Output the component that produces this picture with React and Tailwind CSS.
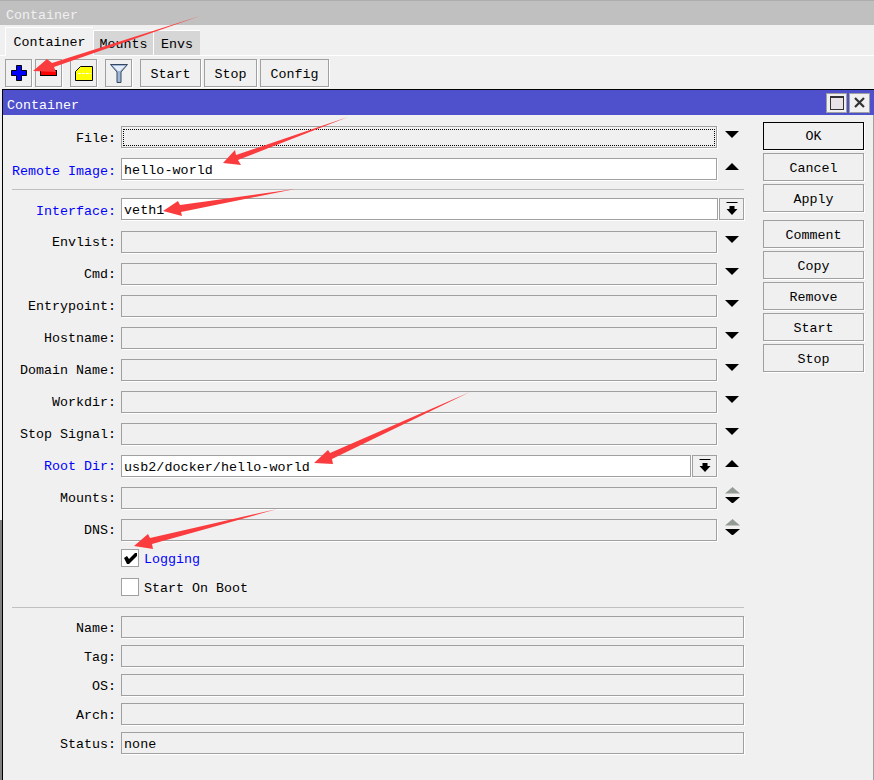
const FONT = "font-['Liberation_Mono',monospace] text-[13.33px] leading-none";

function Tri({ up, gray, big }) {
  const w = big ? 15 : 14;
  const h = big ? 8 : 7;
  return (
    <svg width={w} height={h} viewBox="0 0 14 7" preserveAspectRatio="none" className="block">
      <polygon points={up ? "7,0 14,7 0,7" : "0,0 14,0 7,7"} fill={gray ? "#949a94" : "#000"} />
    </svg>
  );
}

function DropBtn({ className }) {
  return (
    <div className={`h-[22px] flex items-center justify-center bg-[#f0f0f0] border border-[#a0a0a0] shadow-[1px_1px_0_#fff] ${className}`}>
      <svg width="12" height="14" viewBox="0 0 12 14">
        <rect x="0.5" y="0" width="11" height="1" fill="#000" />
        <path d="M3.5 4h5v3h3L6 13 .5 7h3z" fill="#000" />
      </svg>
    </div>
  );
}

function Field({ value, white, dotted, className = "" }) {
  return (
    <div className={`h-[22px] flex items-center border border-[#a0a0a0] shadow-[1px_1px_0_#fff] pl-[2px] min-w-0 ${white ? "bg-white" : "bg-[#f0f0f0]"} ${className}`}>
      {dotted && <div className="h-[17px] w-full -ml-px mr-px border border-dotted border-black" />}
      {value && <span className="text-black pt-[4px] tracking-[0.08px]">{value}</span>}
    </div>
  );
}

function Row({ label, blue, labelPad = "pt-[2px]", children, className = "" }) {
  return (
    <div className={`flex h-[22px] items-center ${className}`}>
      <div className={`w-[113px] mr-[5px] shrink-0 text-right whitespace-nowrap ${labelPad} ${blue ? "text-[#0000ff]" : "text-black"}`}>
        {label}
      </div>
      {children}
    </div>
  );
}

function ArrowSlot({ mode }) {
  return (
    <div className={`w-[28px] h-[22px] shrink-0 flex flex-col items-center justify-center gap-[3px] pl-[2px] ${mode === "both" ? "pb-[6px]" : "pb-[5px]"}`}>
      {mode === "down" && <Tri />}
      {mode === "up" && <Tri up />}
      {mode === "both" && (
        <>
          <Tri up gray big />
          <Tri big />
        </>
      )}
    </div>
  );
}

function TextRow({ label, mode = "down", value, white, dotted, blue, labelPad, className }) {
  return (
    <Row label={label} blue={blue} labelPad={labelPad} className={className}>
      <Field value={value} white={white} dotted={dotted} className="flex-1" />
      <ArrowSlot mode={mode} />
    </Row>
  );
}

function ToolBtn({ children, className = "" }) {
  return (
    <button className={`h-[28px] flex items-center justify-center bg-[#f0f0f0] border border-[#a0a0a0] shadow-[1px_1px_0_#fff] ${className}`}>
      {children}
    </button>
  );
}

function SideBtn({ children, primary, className = "" }) {
  return (
    <button className={`h-[28px] w-full flex items-center justify-center bg-[#f0f0f0] border shadow-[1px_1px_0_#fff] ${primary ? "border-black pt-[2px]" : "border-[#a0a0a0] pt-[4px]"} ${className}`}>
      {children}
    </button>
  );
}

function Separator({ className = "" }) {
  return <div className={`h-px ml-[9px] mr-px bg-[#c0c0c0] ${className}`} />;
}

function Arrows() {
  const shapes = [
    "200,16 52,63 47,59 33,71 56,72 54,67",
    "348,117 236,155 235,150 223,163 241,165 238,160",
    "295,189 180,205 178,201 163,211 182,216 181,212",
    "470,392 330,453 328,450 314,463 333,464 332,459",
    "277,509 150,538 148,534 134,546 153,549 152,544",
  ];
  return (
    <svg width="874" height="780" className="absolute inset-0 pointer-events-none">
      {shapes.map((p) => (
        <polygon key={p} points={p} fill="#fb3c3e" />
      ))}
    </svg>
  );
}

export default function App() {
  return (
    <div className={`relative w-[874px] h-[780px] overflow-hidden flex flex-col bg-[#f0f0f0] ${FONT}`}>
      {/* outer window */}
      <div className="h-[25px] shrink-0 bg-[#c0c0c0] border-t border-[#adadad] flex items-center pl-[6px] pt-[5px] text-[#f0f0f0]">
        Container
      </div>
      <div className="h-[31px] shrink-0 flex items-end pl-[5px] border-b border-white">
        <div className="h-[29px] w-[88px] flex items-center justify-center pt-[2px] bg-[#f0f0f0] border-l border-t border-white -mb-px">Container</div>
        <div className="h-[25px] w-[60px] flex items-center justify-center pt-[4px] bg-[#d6d6d6] border-l border-t border-white">Mounts</div>
        <div className="h-[25px] w-[47px] flex items-center justify-center pt-[4px] bg-[#d6d6d6] border-l border-t border-white">Envs</div>
      </div>
      <div className="h-[33px] shrink-0 flex pl-[5px] pt-[3px]">
        <ToolBtn className="w-[27px] mr-[3px]">
          <svg width="16" height="16" viewBox="0 0 16 16" className="ml-px">
            <path d="M5.5.5h5v5h5v5h-5v5h-5v-5h-5v-5h5z" fill="#0000ff" stroke="#000" />
          </svg>
        </ToolBtn>
        <ToolBtn className="w-[27px] mr-[8px]">
          <svg width="17" height="6" viewBox="0 0 17 6">
            <rect x="0.5" y="0.5" width="16" height="5" fill="#ff0000" stroke="#000" />
          </svg>
        </ToolBtn>
        <ToolBtn className="w-[27px] mr-[8px]">
          <svg width="18" height="15" viewBox="0 0 18 15">
            <path d="M5.5.5h12v14H.5V5.5z" fill="#ffff00" stroke="#000" />
            <path d="M3 7.5h13" stroke="#fff" strokeDasharray="3 1" />
          </svg>
        </ToolBtn>
        <ToolBtn className="w-[27px] mr-[8px]">
          <svg width="18" height="19" viewBox="0 0 18 19">
            <path d="M.5.5h17L11 8v10.5H7V8z" fill="#9fb6d8" stroke="#34485f" />
            <path d="M3 2h12L10 7H8z" fill="#e6eef8" />
          </svg>
        </ToolBtn>
        <ToolBtn className="w-[61px] mr-[3px] pt-[4px]">Start</ToolBtn>
        <ToolBtn className="w-[53px] mr-[3px] pt-[4px]">Stop</ToolBtn>
        <ToolBtn className="w-[69px] pt-[4px]">Config</ToolBtn>
      </div>

      {/* dialog */}
      <div className="flex-1 flex min-h-0">
        <div className="w-[2px] shrink-0 flex flex-col">
          <div className="h-[431px] bg-[#f0f0f0]" />
          <div className="flex-1 bg-[#808080]" />
        </div>
        <div className="flex-1 flex flex-col border-l border-t border-black min-w-0">
          <div className="h-[25px] shrink-0 bg-[#4f51cc] flex items-center justify-between pl-[4px] pr-[4px] text-white">
            <span className="pt-[7px]">Container</span>
            <div className="flex gap-[2px]">
              <div className="w-[21px] h-[20px] bg-[#f0f0f0] border border-[#a0a0a0] flex items-center justify-center">
                <svg width="14" height="14" viewBox="0 0 14 14">
                  <rect x="0.5" y="0.5" width="13" height="13" fill="#e8e4e8" stroke="#333" />
                  <rect x="0" y="0" width="14" height="2" fill="#333" />
                </svg>
              </div>
              <div className="w-[21px] h-[20px] bg-[#f0f0f0] border border-[#a0a0a0] flex items-center justify-center">
                <svg width="11" height="11" viewBox="0 0 11 11">
                  <path d="M1 1l9 9M10 1l-9 9" stroke="#333" strokeWidth="2.2" />
                </svg>
              </div>
            </div>
          </div>
          <div className="flex-1 flex border-r border-[#a0a0a0] min-h-0">
            <div className="w-[742px] shrink-0 flex flex-col">
              <TextRow label="File:" dotted labelPad="pt-[4px]" className="mt-[11px]" />
              <TextRow label="Remote Image:" blue value="hello-world" white mode="up" labelPad="pt-[6px]" className="mt-[10px]" />
              <Separator className="mt-[9px]" />
              <Row label="Interface:" blue labelPad="pt-[6px]" className="mt-[8px]">
                <Field value="veth1" white className="flex-1" />
                <DropBtn className="w-[25px] ml-px mr-px" />
              </Row>
              <TextRow label="Envlist:" className="mt-[11px]" />
              <TextRow label="Cmd:" className="mt-[10px]" />
              <TextRow label="Entrypoint:" className="mt-[10px]" />
              <TextRow label="Hostname:" className="mt-[10px]" />
              <TextRow label="Domain Name:" className="mt-[10px]" />
              <TextRow label="Workdir:" className="mt-[10px]" />
              <TextRow label="Stop Signal:" className="mt-[10px]" />
              <Row label="Root Dir:" blue className="mt-[10px]">
                <Field value="usb2/docker/hello-world" white className="flex-1" />
                <DropBtn className="w-[25px] ml-px" />
                <ArrowSlot mode="up" />
              </Row>
              <TextRow label="Mounts:" mode="both" className="mt-[10px]" />
              <TextRow label="DNS:" mode="both" className="mt-[10px]" />
              <div className="flex items-center h-[18px] mt-[8px] pl-[118px]">
                <div className="w-[18px] h-[18px] bg-white border border-[#a0a0a0] flex items-center justify-center">
                  <svg width="13" height="11" viewBox="0 0 13 11">
                    <path d="M0 5L3 3L5 6L11 0H13V3L5 11H3z" fill="#000" />
                  </svg>
                </div>
                <span className="ml-[5px] pt-[4px] text-[#0000ff]">Logging</span>
              </div>
              <div className="flex items-center h-[18px] mt-[11px] pl-[118px]">
                <div className="w-[18px] h-[18px] bg-white border border-[#a0a0a0]" />
                <span className="ml-[5px] pt-[4px]">Start On Boot</span>
              </div>
              <Separator className="mt-[11px]" />
              <Row label="Name:" labelPad="pt-[4px]" className="mt-[8px]"><Field className="flex-1 mr-px" /></Row>
              <Row label="Tag:" labelPad="pt-[4px]" className="mt-[7px]"><Field className="flex-1 mr-px" /></Row>
              <Row label="OS:" labelPad="pt-[4px]" className="mt-[7px]"><Field className="flex-1 mr-px" /></Row>
              <Row label="Arch:" labelPad="pt-[4px]" className="mt-[7px]"><Field className="flex-1 mr-px" /></Row>
              <Row label="Status:" labelPad="pt-[4px]" className="mt-[7px]"><Field value="none" className="flex-1 mr-px" /></Row>
            </div>
            <div className="w-[101px] ml-[18px] shrink-0 flex flex-col pt-[7px]">
              <SideBtn primary>OK</SideBtn>
              <SideBtn className="mt-[3px]">Cancel</SideBtn>
              <SideBtn className="mt-[3px]">Apply</SideBtn>
              <SideBtn className="mt-[8px]">Comment</SideBtn>
              <SideBtn className="mt-[3px]">Copy</SideBtn>
              <SideBtn className="mt-[3px]">Remove</SideBtn>
              <SideBtn className="mt-[3px]">Start</SideBtn>
              <SideBtn className="mt-[3px]">Stop</SideBtn>
            </div>
          </div>
        </div>
      </div>
      <Arrows />
    </div>
  );
}
